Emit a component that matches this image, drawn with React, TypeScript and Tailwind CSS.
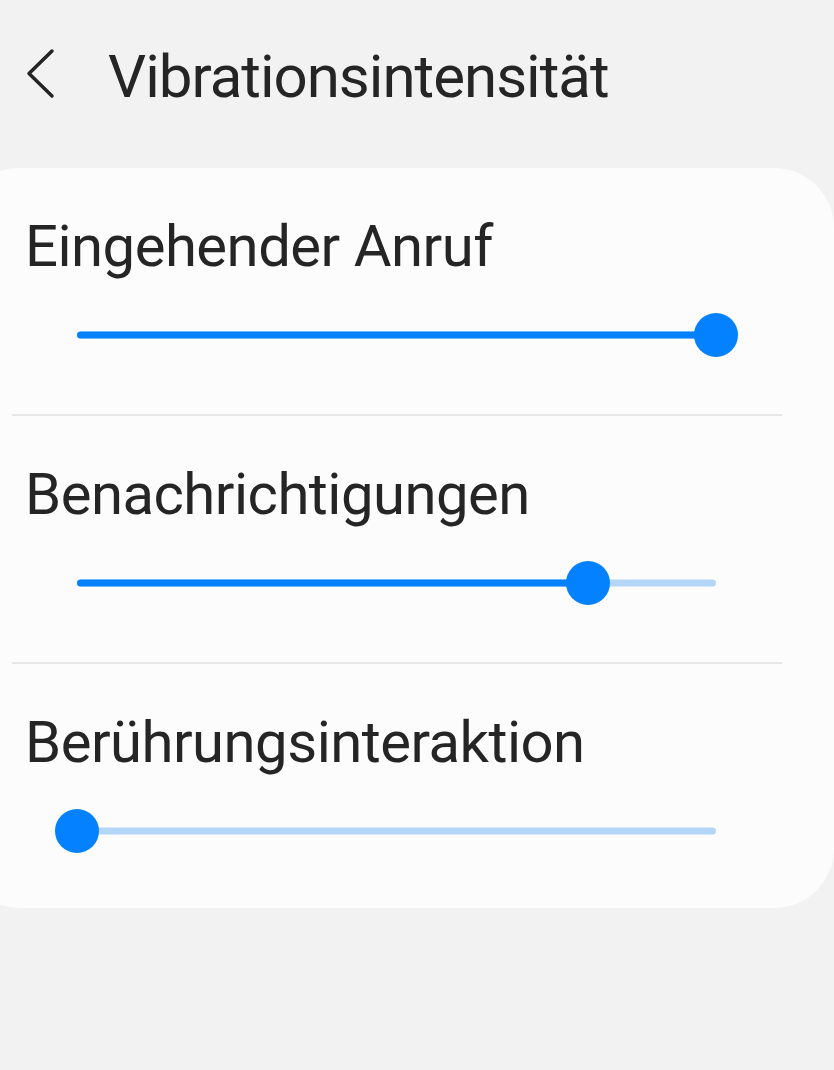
import React from 'react'

const rows = [
  { label: 'Eingehender Anruf', value: 100 },
  { label: 'Benachrichtigungen', value: 80 },
  { label: 'Berührungsinteraktion', value: 0 },
]

function Slider({ value }: { value: number }) {
  return (
    <div className="relative ml-[117px] mt-8 h-[44px] w-[639px]">
      <div className="absolute inset-x-0 top-1/2 h-[7px] -translate-y-1/2 rounded-full bg-[#b3d6f8]" />
      <div
        className="absolute left-0 top-1/2 h-[7px] -translate-y-1/2 rounded-full bg-[#0381fe]"
        style={{ width: `${value}%` }}
      />
      <div
        className="absolute top-0 h-[44px] w-[44px] -translate-x-1/2 rounded-full bg-[#0381fe]"
        style={{ left: `${value}%` }}
      />
    </div>
  )
}

export default function App() {
  return (
    <div
      className="min-h-screen w-[834px] overflow-hidden bg-[#f2f2f2] text-[#252525]"
      style={{ fontFamily: 'Roboto, "Noto Sans", sans-serif' }}
    >
      {/* Header */}
      <header className="flex h-[168px] items-start pt-[42px]">
        <svg className="ml-[26px] mt-[6px]" width="30" height="52" viewBox="0 0 30 52" fill="none">
          <path d="M26 3 L3 25.5 L26 48" stroke="#252525" strokeWidth="3.5" strokeLinecap="round" strokeLinejoin="round" />
        </svg>
        <h1 className="ml-[52px] text-[60px] font-normal leading-[70px] tracking-[-1px]">Vibrationsintensität</h1>
      </header>

      {/* Card */}
      <div className="ml-[-40px] w-[874px] rounded-[60px] bg-[#fcfcfc]">
        {rows.map((row, i) => (
          <div key={row.label}>
            <div className={`pt-[43px] ${i === rows.length - 1 ? 'pb-[55px]' : 'pb-[57px]'}`}>
              <div className="pl-[65px] text-[58px] leading-[70px] tracking-[-0.5px]">{row.label}</div>
              <Slider value={row.value} />
            </div>
            {i < rows.length - 1 && <div className="mx-[52px] h-[2px] bg-[#e6e6e6]" />}
          </div>
        ))}
      </div>
    </div>
  )
}
